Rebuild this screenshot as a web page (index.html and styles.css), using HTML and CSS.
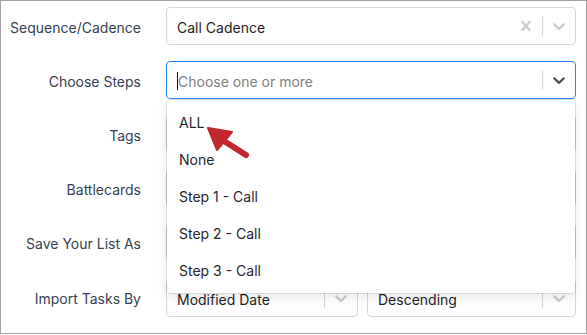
FILE: index.html
```html
<!DOCTYPE html>
<html lang="en">
<head>
    <meta charset="UTF-8">
    <meta name="viewport" content="width=device-width, initial-scale=1.0">
    <title>Import Tasks</title>
    <link rel="stylesheet" href="styles.css">
</head>
<body>
    <div class="frame">
        <div class="form-grid">
            <label class="field-label">Sequence/Cadence</label>
            <div class="select">
                <div class="select-value">Call Cadence</div>
                <div class="indicator indicator-light">
                    <svg viewBox="0 0 20 20" width="20" height="20"><path d="M14.348 14.849c-0.469 0.469-1.229 0.469-1.697 0l-2.651-3.030-2.651 3.029c-0.469 0.469-1.229 0.469-1.697 0-0.469-0.469-0.469-1.229 0-1.697l2.758-3.15-2.759-3.152c-0.469-0.469-0.469-1.228 0-1.697s1.228-0.469 1.697 0l2.652 3.031 2.651-3.031c0.469-0.469 1.228-0.469 1.697 0s0.469 1.229 0 1.697l-2.758 3.152 2.758 3.15c0.469 0.469 0.469 1.229 0 1.698z"/></svg>
                </div>
                <span class="separator"></span>
                <div class="indicator indicator-light">
                    <svg viewBox="0 0 20 20" width="20" height="20"><path d="M4.516 7.548c0.436-0.446 1.043-0.481 1.576 0l3.908 3.747 3.908-3.747c0.533-0.481 1.141-0.446 1.574 0 0.436 0.445 0.408 1.197 0 1.615-0.406 0.418-4.695 4.502-4.695 4.502-0.217 0.223-0.502 0.335-0.787 0.335s-0.57-0.112-0.789-0.335c0 0-4.287-4.084-4.695-4.502s-0.436-1.17 0-1.615z"/></svg>
                </div>
            </div>

            <label class="field-label">Choose Steps</label>
            <div class="select-wrap">
                <div class="select select-focused">
                    <div class="select-value placeholder"><span class="caret"></span>Choose one or more</div>
                    <span class="separator"></span>
                    <div class="indicator indicator-dark">
                        <svg viewBox="0 0 20 20" width="20" height="20"><path d="M4.516 7.548c0.436-0.446 1.043-0.481 1.576 0l3.908 3.747 3.908-3.747c0.533-0.481 1.141-0.446 1.574 0 0.436 0.445 0.408 1.197 0 1.615-0.406 0.418-4.695 4.502-4.695 4.502-0.217 0.223-0.502 0.335-0.787 0.335s-0.57-0.112-0.789-0.335c0 0-4.287-4.084-4.695-4.502s-0.436-1.17 0-1.615z"/></svg>
                    </div>
                </div>
                <div class="menu">
                    <div class="option">ALL</div>
                    <div class="option">None</div>
                    <div class="option">Step 1 - Call</div>
                    <div class="option">Step 2 - Call</div>
                    <div class="option">Step 3 - Call</div>
                    <svg class="pointer" viewBox="0 0 60 45" width="60" height="45">
                        <line x1="29" y1="27" x2="51" y2="41" stroke="#c1272d" stroke-width="6" stroke-linecap="round"/>
                        <polygon points="13,14 37,18 22,36" fill="#c1272d" stroke="#c1272d" stroke-width="2" stroke-linejoin="round"/>
                    </svg>
                </div>
            </div>

            <label class="field-label">Tags</label>
            <div class="select"><div class="select-value"></div></div>

            <label class="field-label">Battlecards</label>
            <div class="select"><div class="select-value"></div></div>

            <label class="field-label">Save Your List As</label>
            <div class="select"><div class="select-value"></div></div>

            <label class="field-label last">Import Tasks By</label>
            <div class="pair last">
                <div class="select">
                    <div class="select-value">Modified Date</div>
                    <span class="separator"></span>
                    <div class="indicator indicator-light">
                        <svg viewBox="0 0 20 20" width="20" height="20"><path d="M4.516 7.548c0.436-0.446 1.043-0.481 1.576 0l3.908 3.747 3.908-3.747c0.533-0.481 1.141-0.446 1.574 0 0.436 0.445 0.408 1.197 0 1.615-0.406 0.418-4.695 4.502-4.695 4.502-0.217 0.223-0.502 0.335-0.787 0.335s-0.57-0.112-0.789-0.335c0 0-4.287-4.084-4.695-4.502s-0.436-1.17 0-1.615z"/></svg>
                    </div>
                </div>
                <div class="select">
                    <div class="select-value">Descending</div>
                    <span class="separator"></span>
                    <div class="indicator indicator-light">
                        <svg viewBox="0 0 20 20" width="20" height="20"><path d="M4.516 7.548c0.436-0.446 1.043-0.481 1.576 0l3.908 3.747 3.908-3.747c0.533-0.481 1.141-0.446 1.574 0 0.436 0.445 0.408 1.197 0 1.615-0.406 0.418-4.695 4.502-4.695 4.502-0.217 0.223-0.502 0.335-0.787 0.335s-0.57-0.112-0.789-0.335c0 0-4.287-4.084-4.695-4.502s-0.436-1.17 0-1.615z"/></svg>
                    </div>
                </div>
            </div>
        </div>
    </div>
</body>
</html>
```

FILE: styles.css
```css
body {
    margin: 0;
    padding: 0;
    background-color: #fff;
    font-family: 'Inter', 'Open Sans', sans-serif;
    font-size: 14px;
}
.frame {
    width: 587px;
    height: 334px;
    box-sizing: border-box;
    border: 1px solid #a2a2a2;
    overflow: hidden;
    padding: 6px 10px 0 0;
}
.form-grid {
    display: grid;
    grid-template-columns: 140px 410px;
    grid-auto-rows: 38px;
    column-gap: 25px;
    row-gap: 16px;
}
.field-label {
    display: flex;
    align-items: center;
    justify-content: flex-end;
    color: #364152;
    font-size: 14px;
    padding-top: 2px;
}
.last {
    margin-top: 2px;
}
.select-wrap {
    position: relative;
}
.select {
    display: flex;
    align-items: center;
    height: 38px;
    box-sizing: border-box;
    border: 1px solid #d6d6d9;
    border-radius: 4px;
    background-color: #fff;
}
.select-focused {
    border-color: #2684ff;
}
.select-value {
    flex: 1;
    display: flex;
    align-items: center;
    padding: 2px 0 0 10px;
    color: #1e1e1e;
    font-size: 14px;
    white-space: nowrap;
    overflow: hidden;
}
.placeholder {
    color: #808080;
}
.caret {
    width: 1px;
    height: 18px;
    background-color: #111;
}
.separator {
    align-self: stretch;
    width: 1px;
    margin: 8px 0;
    background-color: #d6d6d9;
}
.indicator {
    display: flex;
    align-items: center;
    padding: 0 6px;
}
.indicator-light svg {
    fill: #cccccc;
}
.indicator-dark svg {
    fill: #555;
}
.pair {
    display: grid;
    grid-template-columns: 192px 1fr;
    column-gap: 9px;
}
.menu {
    position: absolute;
    top: 100%;
    left: 1px;
    right: 1px;
    margin-top: 1px;
    padding: 4px 0;
    background-color: #fff;
    border-radius: 4px;
    box-shadow: 0 0 0 1px rgba(0, 0, 0, 0.1), 0 4px 11px rgba(0, 0, 0, 0.1);
    z-index: 2;
}
.option {
    padding: 8px 12px;
    line-height: 21px;
    color: #1f2430;
    font-size: 14px;
}
.pointer {
    position: absolute;
    left: 28px;
    top: 14px;
}
```
